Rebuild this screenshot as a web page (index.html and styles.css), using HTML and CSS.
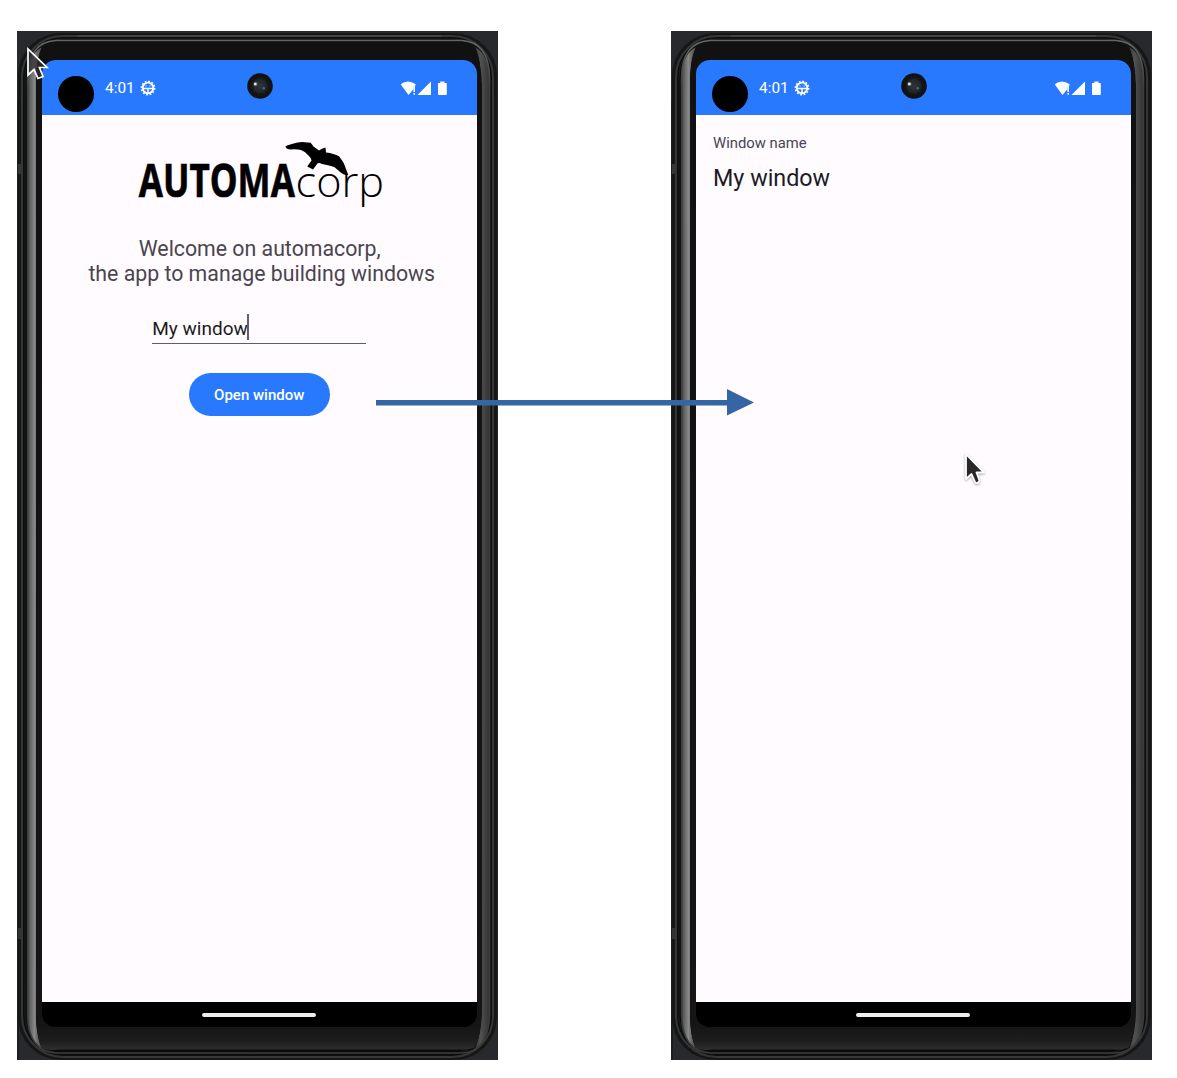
FILE: index.html
```
<!DOCTYPE html>
<html lang="en">
<head>
<meta charset="utf-8">
<title>Automacorp</title>
<link rel="stylesheet" href="styles.css">
</head>
<body>
<svg width="0" height="0" class="defs">
  <defs>
    <linearGradient id="railL"><stop offset="0" stop-color="#383838"/><stop offset=".2" stop-color="#606060"/><stop offset=".5" stop-color="#888"/><stop offset=".7" stop-color="#666"/><stop offset="1" stop-color="#484848"/></linearGradient>
    <linearGradient id="railR"><stop offset="0" stop-color="#393939"/><stop offset=".35" stop-color="#525252"/><stop offset="1" stop-color="#303030"/></linearGradient>
    <linearGradient id="chin" x2="0" y2="1"><stop offset="0" stop-color="#111"/><stop offset=".975" stop-color="#151515"/><stop offset=".991" stop-color="#1d1d1d"/><stop offset="1" stop-color="#2e2e2e"/></linearGradient>
    <linearGradient id="ring" x2="0" y2="1"><stop offset="0" stop-color="#666"/><stop offset=".05" stop-color="#3d3d3d"/><stop offset="1" stop-color="#3b3b3b"/></linearGradient>
    <radialGradient id="lens"><stop offset="0" stop-color="#30343b"/><stop offset=".5" stop-color="#22252a"/><stop offset=".65" stop-color="#151515"/><stop offset="1" stop-color="#101010"/></radialGradient>
    <symbol id="shell" viewBox="0 0 481 1029">
      <rect width="481" height="1029" fill="#27292d"/>
      <path d="M0 70H2V1029H0Z" fill="#1c1e20"/>
      <rect x="1" y="2" width="479" height="1027" rx="43" fill="#151616"/>
      <rect x="1" y="133" width="5" height="10" fill="#343637"/>
      <rect x="1" y="897" width="5" height="11" fill="#303233"/>
      <rect x="5" y="5" width="471" height="1021" rx="41" fill="#0d0d0d" stroke="#363636" stroke-width="2"/>
      <rect x="8" y="8" width="465" height="1014" rx="38" fill="#080808" stroke="#1d1d1d" stroke-width="1"/>
      <path d="M10 54C10 34 14 22 25 16C21 25 19 35 19 54V982C19 997 21 1009 25 1018C14 1010 10 999 10 982Z" fill="url(#railL)"/>
      <path d="M473 54C473 34 469 22 458 16C462 25 464 35 464 54V982C464 997 462 1009 458 1018C469 1010 473 999 473 982Z" fill="url(#railR)"/>
      <path d="M40 11H443Q455 11 458 16Q464 30 465 54V982Q464 1007 457 1017Q450 1019 443 1019H39Q29 1019 25 1017Q19 1005 19 982V54Q19 30 25 16Q28 11 40 11Z" fill="url(#chin)"/>
      <path d="M10.500 48C10.500 22 21 10.500 39 9.500H445C462 10.500 472.500 22 472.500 48V982C472.500 1010 461 1022 444 1022H39C22 1021 10.500 1010 10.500 982Z" fill="none" stroke="url(#ring)" stroke-width="1.500"/>
      <path d="M40 1019.500H444" stroke="#0c0c0c" stroke-width="2"/>
      <path d="M60 5H425" stroke="#414344" stroke-width="2"/>
    </symbol>
    <symbol id="gear" viewBox="0 0 16 16">
      <circle cx="8" cy="8" r="5.300" fill="none" stroke="#fff" stroke-width="1.800"/>
      <circle cx="8" cy="8" r="6.600" fill="none" stroke="#fff" stroke-width="1.600" stroke-dasharray="1.728 1.728"/>
      <path d="M3 8.500H13M8 8.500V13" stroke="#fff" stroke-width="1.500"/>
      <path d="M5.500 6h1M9.500 6h1" stroke="#fff" stroke-width="1"/>
    </symbol>
    <symbol id="signals" viewBox="0 0 48 16">
      <path d="M.8 4.600Q3 2 8 1.400Q13 2 15.600 4.200V5.500H13.600V9L8.500 15Z" fill="#fff"/>
      <path d="M14.200 5V12M14.200 13V14.800" stroke="#fff" stroke-width="1.500"/>
      <path d="M31 1.500V15H17.500Z" fill="#fff"/>
      <path d="M38 3.600Q38 3 38.700 3H40.300V1.500H44.500V3H46.100Q46.800 3 46.800 3.600V14.300Q46.800 15 46.100 15H38.700Q38 15 38 14.300Z" fill="#fff"/>
    </symbol>
    <symbol id="camera" viewBox="0 0 26 26">
      <circle cx="13" cy="13" r="12.800" fill="url(#lens)"/>
      <circle cx="8.500" cy="11" r="2.200" fill="#7b8580" opacity=".6"/><circle cx="8.300" cy="11" r="1.300" fill="#e9eee7"/>
      <circle cx="16.700" cy="15.200" r="1.300" fill="#35689a"/>
    </symbol>
  </defs>
</svg>
<main class="stage">
  <section class="phone">
    <svg class="shell"><use href="#shell"/></svg>
    <div class="screen">
      <header class="status">
        <span class="punch"></span><span class="clock">4:01</span><svg class="gear"><use href="#gear"/></svg>
        <svg class="camera"><use href="#camera"/></svg>
        <svg class="signals"><use href="#signals"/></svg>
      </header>
      <div class="content welcome">
        <svg class="logo" viewBox="0 0 250 70" role="img" aria-label="Automacorp">
          <text class="logo-bold" x="2.800" y="56.700" textLength="156" lengthAdjust="spacingAndGlyphs">AUTOMA</text>
          <text class="logo-light" x="159.600" y="57" textLength="88.500" lengthAdjust="spacingAndGlyphs">corp</text>
          <path d="M149.300 6.700Q150 5.500 157.600 3.500Q162 2.300 166 2.100L174.600 2.700Q176 4.500 177.500 6.500L183 10.500Q185.500 8.500 189.500 7.400L190 12.500Q198 13.500 203 16.200Q206 20 207.800 23.300L212.300 35Q208 35.500 205 32.700L198.300 27Q192 25 186 24Q183.500 22.500 181.600 23.300L177 29.500L171.200 26.500L175.500 20.500Q175 17.500 172 15Q169 11.500 165 10Q160 8.800 154 9.600Q150.500 9 149.300 6.700Z"/>
        </svg>
        <p class="intro"><span class="greeting">Welcome on automacorp,</span><br>the app to manage building windows</p>
        <div class="field"><span>My window</span><i class="caret"></i></div>
        <button class="open">Open window</button>
      </div>
      <footer class="nav"><span class="handle"></span></footer>
    </div>
  </section>
  <section class="phone">
    <svg class="shell"><use href="#shell"/></svg>
    <div class="screen">
      <header class="status">
        <span class="punch"></span><span class="clock">4:01</span><svg class="gear"><use href="#gear"/></svg>
        <svg class="camera"><use href="#camera"/></svg>
        <svg class="signals"><use href="#signals"/></svg>
      </header>
      <div class="content detail">
        <div class="label">Window name</div>
        <div class="value">My window</div>
      </div>
      <footer class="nav"><span class="handle"></span></footer>
    </div>
  </section>
  <svg class="arrow" viewBox="0 0 378 28"><path d="M0 12H351V1L378 14.500L351 27.500V17.500H0Z" fill="#3465a4"/></svg>
  <svg class="pointer-dark" viewBox="0 0 28 36"><path d="M4 3V29L10 23.500L14 32.500L19 30.500L15.500 21.500H23Z" fill="#303030" fill-opacity=".75" stroke="#fff" stroke-width="1.700"/></svg>
  <svg class="pointer-light" viewBox="0 0 28 36"><path d="M4 3V28L9.500 23L13.500 32Q16.500 32.500 17.500 29.500L14.500 21.500H22Z" fill="#282828" stroke="#fff" stroke-width="1.800" stroke-linejoin="round"/></svg>
</main>
</body>
</html>
```
FILE: styles.css
```
* { box-sizing: border-box; }
body { margin: 0; background: #fff; font-family: Roboto, sans-serif; }
.defs { position: absolute; }
.stage { position: relative; display: flex; gap: 173px; width: 1177px; height: 1078px; padding: 31px 0 0 17px; overflow: hidden; }
.phone { position: relative; flex: none; width: 481px; height: 1029px; padding: 29px 21.5px 33px 25px; }
.shell { position: absolute; inset: 0; width: 481px; height: 1029px; }
.screen { position: relative; display: flex; flex-direction: column; width: 434.5px; height: 967px; overflow: hidden; border-radius: 14px; background: #000; }
.status { position: relative; display: flex; flex: none; align-items: center; height: 55px; padding: 1px 29px 0 16px; background: #2979ff; color: #fff; }
.punch { width: 35.500px; height: 35.500px; margin-top: 12px; border-radius: 50%; background: #000; }
.clock { margin: 0 0 0 11.500px; width: 34.500px; font-size: 15.400px; line-height: 20px; }
.gear { width: 16px; height: 16px; margin: -1px 0 0 0.500px; }
.camera { position: absolute; left: 204.500px; top: 12.500px; width: 26px; height: 26px; }
.signals { width: 48px; height: 16px; margin: -1px 0 0 auto; }
.content { flex: 1; background: #fffbff; }
.welcome { display: flex; flex-direction: column; align-items: center; padding-top: 25px; }
.logo { width: 250px; height: 70px; margin-left: 3px; overflow: visible; }
.logo-bold { font: 700 46.500px "Open Sans", sans-serif; stroke: #000; stroke-width: .7px; }
.logo-light { font: 300 43px "Open Sans", sans-serif; }
.intro { margin: 26px 0 0 5px; color: #49454f; font-size: 21.300px; line-height: 25px; text-align: center; white-space: nowrap; }
.greeting { margin-right: 4px; }
.field { display: flex; align-items: center; width: 214px; height: 33px; margin-top: 25px; padding-top: 2px; border-bottom: 1.500px solid #625b71; color: #1c1b1f; font-size: 19px; }
.caret { width: 2px; height: 26px; margin: -2px 0 0 -1px; background: #625b71; }
.open { width: 141.500px; height: 43px; margin-top: 28.500px; padding: 1px 0 0; border: 0; border-radius: 22px; background: #2979ff; color: #fff; font: 500 15px Roboto, sans-serif; }
.detail { padding: 18px 17px; }
.label { color: #49454f; font-size: 14.800px; line-height: 20px; }
.value { margin-top: 10px; color: #1c1b1f; font-size: 23.300px; line-height: 30px; }
.nav { display: flex; flex: none; align-items: center; justify-content: center; height: 25.500px; background: #000; }
.handle { width: 114px; height: 4px; margin-top: 1px; border-radius: 2px; background: #eee; }
.arrow { position: absolute; left: 376px; top: 388px; width: 378px; height: 28px; }
.pointer-dark { position: absolute; left: 23.500px; top: 46px; width: 28px; height: 36px; }
.pointer-light { position: absolute; left: 962px; top: 451px; width: 28px; height: 36px; filter: drop-shadow(0 1px 1px rgba(0,0,0,.35)); }
```
